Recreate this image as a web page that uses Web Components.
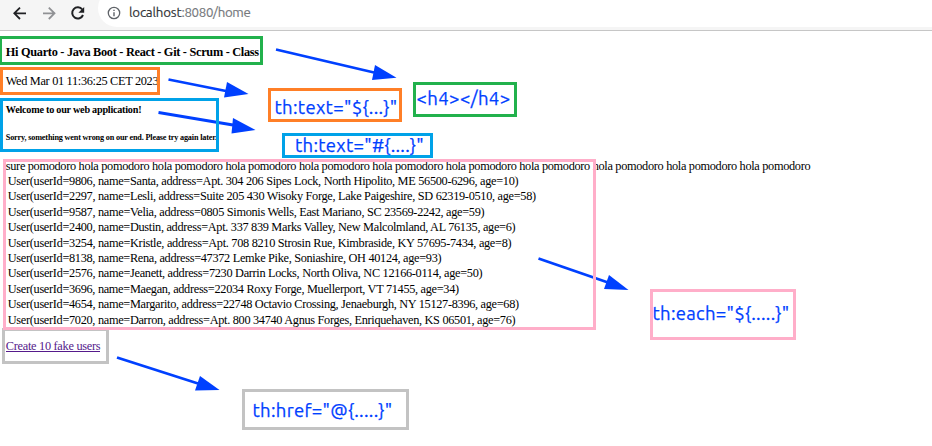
<!DOCTYPE html>
<html lang="en">
<head>
<meta charset="utf-8">
<title>localhost:8080/home</title>
<style>
html, body { margin: 0; background: #fff; overflow: hidden; }
</style>
</head>
<body>
<annotated-page></annotated-page>
<script>
// A single line of text, set to an exact width by adjusting its tracking.
customElements.define('fit-text', class extends HTMLElement {
  connectedCallback() {
    const root = this.attachShadow({ mode: 'open' });
    root.innerHTML = `<style>:host{display:block;white-space:pre;width:max-content}span{display:inline-block}</style><span></span>`;
    const s = root.querySelector('span');
    s.textContent = this.getAttribute('text');
    const target = parseFloat(this.getAttribute('width'));
    const natural = s.getBoundingClientRect().width;
    if (target && natural) s.style.letterSpacing = (target - natural) / s.textContent.length + 'px';
  }
});

customElements.define('browser-bar', class extends HTMLElement {
  connectedCallback() {
    this.attachShadow({ mode: 'open' }).innerHTML = `
<style>
:host{display:flex;box-sizing:border-box;height:31px;background:#f5f5f5;border-bottom:1px solid #c6c6c6;overflow:hidden}
.nav{flex:none;width:98px;height:30px}
.pill{flex:1;height:38px;margin-top:-11px;background:#fff;border-radius:19px 0 0 19px;display:flex;align-items:center;box-sizing:border-box;padding:9px 0 0 9px;gap:8px}
.pill svg{flex:none}
.url{display:flex;font:13.3px Ubuntu,"Noto Sans",sans-serif;color:#75787c;line-height:18px;-webkit-text-stroke:.15px}
.host{color:#303236}
</style>
<svg class="nav" viewBox="0 0 98 30" fill="none" stroke-width="1.8">
 <path d="M26 13.3H14.6M20 7.6l-5.7 5.7 5.7 5.7" stroke="#202124"/>
 <path d="M43 13.3h11.4M48.800 7.600l5.700 5.700-5.700 5.700" stroke="#909194"/>
 <path d="M82.300 9.500A5.600 5.600 0 1 0 83 15" stroke="#202124" stroke-width="2"/>
 <path d="M84.200 7v5.800h-5.800z" fill="#202124"/>
</svg>
<div class="pill">
 <svg width="14" height="14" viewBox="0 0 14 14" fill="none" stroke="#5f6368"><circle cx="7" cy="7" r="5.700" stroke-width="1.300"/><path d="M7 6.200V10.300M7 3.700V5.100" stroke-width="1.400"/></svg>
 <div class="url"><fit-text class="host" text="localhost" width="52.500"></fit-text><fit-text text=":8080/home" width="69"></fit-text></div>
</div>`;
  }
});

customElements.define('home-content', class extends HTMLElement {
  connectedCallback() {
    const users = [
      ['User(userId=9806, name=Santa, address=Apt. 304 206 Sipes Lock, North Hipolito, ME 56500-6296, age=10)', 510.5],
      ['User(userId=2297, name=Lesli, address=Suite 205 430 Wisoky Forge, Lake Paigeshire, SD 62319-0510, age=58)', 528],
      ['User(userId=9587, name=Velia, address=0805 Simonis Wells, East Mariano, SC 23569-2242, age=59)', 476.5],
      ['User(userId=2400, name=Dustin, address=Apt. 337 839 Marks Valley, New Malcolmland, AL 76135, age=6)', 507.5],
      ['User(userId=3254, name=Kristle, address=Apt. 708 8210 Strosin Rue, Kimbraside, KY 57695-7434, age=8)', 503.5],
      ['User(userId=8138, name=Rena, address=47372 Lemke Pike, Soniashire, OH 40124, age=93)', 433.5],
      ['User(userId=2576, name=Jeanett, address=7230 Darrin Locks, North Oliva, NC 12166-0114, age=50)', 474.5],
      ['User(userId=3696, name=Maegan, address=22034 Roxy Forge, Muellerport, VT 71455, age=34)', 451],
      ['User(userId=4654, name=Margarito, address=22748 Octavio Crossing, Jenaeburgh, NY 15127-8396, age=68)', 511],
      ['User(userId=7020, name=Darron, address=Apt. 800 34740 Agnus Forges, Enriquehaven, KS 06501, age=76)', 507.5]
    ];
    this.attachShadow({ mode: 'open' }).innerHTML = `
<style>
:host{display:block;padding:13px 0 0 5.800px;font:12.300px/16px "Liberation Serif",serif;color:#000}
h4,h5,p{margin:0;font-size:inherit}
h4{margin-bottom:13px}
.date{margin-bottom:14px}
.w{font-size:10.200px;line-height:14px;margin-bottom:15px}
.s{font-size:8.200px;line-height:12px;margin-bottom:14px}
.users{display:grid;grid-auto-rows:15.400px;padding-left:2px;margin-top:-1px}
a{display:block;width:max-content;height:13px;line-height:16px;margin-top:11px;color:#551a8b;border-bottom:1px solid #551a8b;text-decoration:none}
</style>
<h4><fit-text text="Hi Quarto - Java Boot - React - Git - Scrum - Class" width="253"></fit-text></h4>
<p class="date"><fit-text text="Wed Mar 01 11:36:25 CET 2023" width="152.500"></fit-text></p>
<h5 class="w"><fit-text text="Welcome to our web application!" width="135.500"></fit-text></h5>
<h5 class="s"><fit-text text="Sorry, something went wrong on our end. Please try again later." width="211"></fit-text></h5>
<p><fit-text text="sure pomodoro ${Array(10).fill('hola pomodoro').join(' ')}" width="804.500"></fit-text></p>
<div class="users">${users.map(([t, w]) => `<fit-text text="${t}" width="${w}"></fit-text>`).join('')}</div>
<a href="#"><fit-text text="Create 10 fake users" width="94.500"></fit-text></a>`;
  }
});

// Free-canvas markup laid over the page: frames, arrows and captions.
customElements.define('markup-layer', class extends HTMLElement {
  connectedCallback() {
    const frames = [
      [2, 328, 107, 36, '#c3c3c3'], [3, 159, 593, 171, '#ffaec9'],
      [0, 98, 219, 54, '#00a2e8'], [0, 67, 160, 28, '#ff7f27'], [-1, 36, 264, 29, '#22b14c'],
      [268, 88, 134, 34, '#ff7f27'], [413, 82, 104, 35, '#22b14c'], [282, 133, 151, 25, '#00a2e8'],
      [650, 289, 146, 51, '#ffaec9'], [242, 389, 167, 41, '#c3c3c3']
    ];
    const arrows = [
      ['M276 49.500L374 72.500', '375,65 396.500,77.800 372,80'],
      ['M168.500 79.500L226 91', '227,82 248.500,94 224,97.500'],
      ['M158.500 112.500L233 125', '233,118 255.500,130 231.500,133.500'],
      ['M538.500 258.500L608 282.500', '609,275 628.500,290 604,289'],
      ['M117 357.500L198 383.500', '200,376 219.500,390 195,390.500']
    ];
    const caps = [
      ['th:text="\${...}"', 274.5, 95, 123], ['<h4></h4>', 416.5, 86, 94],
      ['th:text="#{....}"', 295, 133, 129], ['th:each="\${.....}"', 652.5, 301, 137],
      ['th:href="@{.....}"', 252.5, 398, 140]
    ];
    const esc = t => t.replace(/</g, '&lt;').replace(/"/g, '&quot;');
    this.attachShadow({ mode: 'open' }).innerHTML = `
<style>
:host{position:absolute;inset:0;pointer-events:none}
.f{position:absolute;box-sizing:border-box;border:3px solid}
svg{position:absolute;inset:0}
fit-text{position:absolute;font:18.500px/24px Ubuntu,"Noto Sans",sans-serif;color:#0040ff;-webkit-text-stroke:.25px #0040ff}
</style>
<svg width="932" height="446" fill="#0040ff">${arrows.map(([l, p]) => `<path d="${l}" stroke="#0040ff" stroke-width="2.800"/><polygon points="${p}"/>`).join('')}</svg>
${frames.map(([x, y, w, h, c]) => `<div class="f" style="left:${x}px;top:${y}px;width:${w}px;height:${h}px;border-color:${c}"></div>`).join('')}
${caps.map(([t, x, y, w]) => `<fit-text text="${esc(t)}" width="${w}" style="left:${x}px;top:${y}px"></fit-text>`).join('')}`;
  }
});

customElements.define('annotated-page', class extends HTMLElement {
  connectedCallback() {
    this.attachShadow({ mode: 'open' }).innerHTML = `
<style>:host{display:block;position:relative;width:932px;height:446px;overflow:hidden;background:#fff}</style>
<browser-bar></browser-bar><home-content></home-content><markup-layer></markup-layer>`;
  }
});
</script>
</body>
</html>
